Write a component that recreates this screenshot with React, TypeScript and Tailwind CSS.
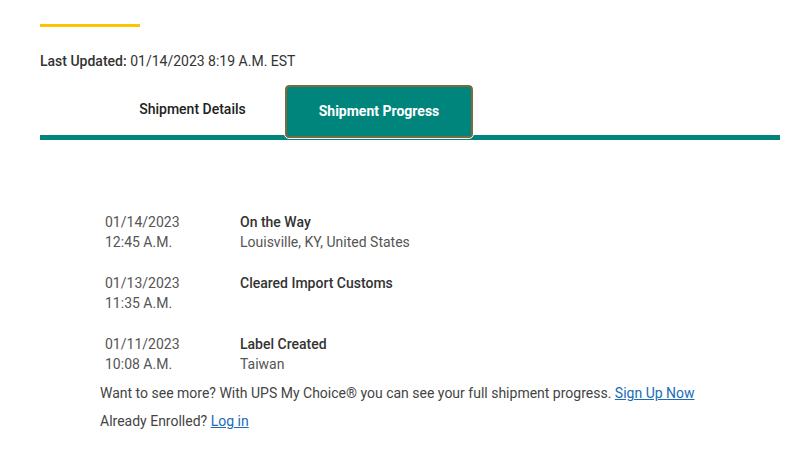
import React from 'react';

const FONT = { fontFamily: 'Roboto, "Noto Sans", sans-serif' };

const EVENTS = [
  { date: '01/14/2023', time: '12:45 A.M.', status: 'On the Way', place: 'Louisville, KY, United States' },
  { date: '01/13/2023', time: '11:35 A.M.', status: 'Cleared Import Customs', place: '' },
  { date: '01/11/2023', time: '10:08 A.M.', status: 'Label Created', place: 'Taiwan' },
];

export default function App() {
  return (
    <div className="h-[470px] w-[787px] bg-white text-[14px] text-[#333]" style={FONT}>
      <div className="pl-10 pr-[7px] pt-6">
        <div className="h-[3px] w-[100px] bg-[#ffc400]" />

        <p className="mt-[24px] leading-[20px] text-[#333]">
          <span className="font-medium">Last Updated:</span> 01/14/2023 8:19 A.M. EST
        </p>

        {/* tabs */}
        <div className="relative mt-[14px] flex h-[55px] items-start border-b-[5px] border-[#00857d]">
          <button className="ml-[60px] mt-[14px] w-[185px] text-center text-[14px] font-medium text-[#222]">
            Shipment Details
          </button>
          <button className="relative z-10 flex h-[53px] w-[188px] items-center justify-center rounded-[4px] border-2 border-[#7d6a3c] bg-[#00857d] text-[14px] font-bold text-white outline outline-1 outline-white">
            Shipment Progress
          </button>
        </div>

        {/* progress list */}
        <div className="ml-[65px] mt-[72px] flex flex-col gap-[21px]">
          {EVENTS.map((e) => (
            <div key={e.date} className="flex leading-[20px]">
              <div className="w-[135px] text-[#555]">
                <div>{e.date}</div>
                <div>{e.time}</div>
              </div>
              <div>
                <div className="font-medium text-[#333]">{e.status}</div>
                <div className="h-[20px] text-[#555]">{e.place}</div>
              </div>
            </div>
          ))}
        </div>

        <div className="ml-[60px] mt-[5px] leading-[28px] text-[#444]">
          <p>
            Want to see more? With UPS My Choice® you can see your full shipment progress.{' '}
            <a href="#" className="text-[#1a6bb8] underline">Sign Up Now</a>
          </p>
          <p>
            Already Enrolled? <a href="#" className="text-[#1a6bb8] underline">Log in</a>
          </p>
        </div>
      </div>
    </div>
  );
}
